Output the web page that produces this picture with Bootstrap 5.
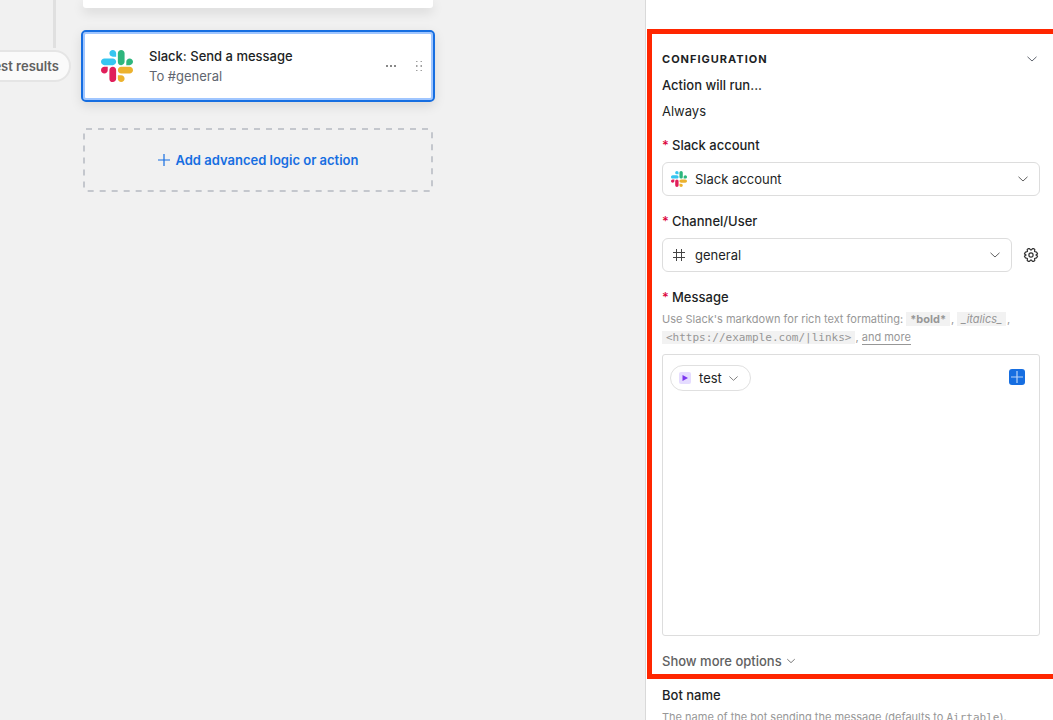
<!DOCTYPE html>
<html lang="en">
<head>
<meta charset="utf-8">
<meta name="viewport" content="width=device-width, initial-scale=1">
<title>Automation</title>
<link href="https://cdn.jsdelivr.net/npm/bootstrap@5.3.0/dist/css/bootstrap.min.css" rel="stylesheet">
<style>
body{font-family:Inter,"Liberation Sans",sans-serif;font-size:13px;line-height:20px;color:#1d1f25;background:#fff}
svg{display:block;flex:none}
.canvas{background:#f1f1f1;gap:10px}
.rail{width:71px}
.rail-line{width:3px;height:48px;background:#e0e0e0;margin:0 15px 2px 0}
.test-pill{font-size:13px;font-weight:600;line-height:18px;color:#616161;background:#fafafa;border:2px solid #e5e5e5;border-radius:16px;padding:5px 10px;white-space:nowrap}
.steps{width:354px}
.step-above{height:8px;background:#fff;border-radius:0 0 3px 3px;box-shadow:0 4px 12px rgba(0,0,0,.12);margin:0 2px 22px}
.step-selected{height:72px;background:#fff;border:2px solid #166ee1;border-radius:5px;box-shadow:inset 0 0 0 2px #a0c6ff,0 4px 12px rgba(0,0,0,.1);padding:0 10px 0 18px}
.step-name{font-weight:500}
.step-sub{color:#616670}
.step-actions{gap:18px}
.add-step{position:relative;height:64px;margin:26px 2px 0;border:0;background:none;color:#166ee1;font-weight:600;gap:6px}
.add-frame{position:absolute;inset:0;width:100%;height:100%}
.add-frame rect{width:calc(100% - 2px);height:calc(100% - 2px)}
.icon-btn{border:0;background:none;padding:0;color:#616670}
.inspector{flex:0 0 408px;border-left:1px solid #d9d9d9;padding-left:1px}
.inspector-top{height:29px}
.config{border:5px solid #ff2600;border-right:0;padding:15px 13px 2px 10px}
.config-title{font-size:11px;font-weight:700;line-height:20px;letter-spacing:1px;margin:0}
.collapse-btn{padding-right:2px}
.run-block{gap:6px;margin:6px 0 14px}
.req{color:#dc043b;width:10px}
.field-label{font-weight:500;margin:0 0 7px}
.pick{position:relative}
.picker-row{margin-bottom:15px}
.pick>svg{position:absolute;left:9px;top:9px;pointer-events:none}
.pick .form-select{height:34px;font-size:13px;line-height:20px;color:#1d1f25;border-color:#ddd;border-radius:6px;padding:6px 32px 6px 32px;background-position:right 10px center;background-size:12px 12px;background-image:url("data:image/svg+xml,%3Csvg xmlns='http://www.w3.org/2000/svg' viewBox='0 0 12 12'%3E%3Cpath d='M1.5 3.8 6 8l4.500-4.200' fill='none' stroke='%23616161' stroke-width='1'/%3E%3C/svg%3E")}
.gear-btn{padding:0 1px 0 11px}
.hint{font-size:11px;line-height:18px;color:#979797}
.msg-hint{margin:3px 0 7px}
.hint code{font-family:"DejaVu Sans Mono",monospace;font-size:11px;color:inherit}
.tag{background:#f2f2f2;padding:0 4px}
.hint .tag{margin-right:1px}
.hint code.tag{margin-right:0}
.hint a{color:inherit;text-decoration:none;border-bottom:1px solid #979797}
.editor{height:282px;border:1px solid #ddd;border-radius:3px;padding:10px 14px 8px 7px}
.token{height:26px;border:1px solid #e0e0e0;border-radius:13px;background:#fff;padding:0 11px 0 8px;color:#1d1f25}
.token span{margin:0 6px 0 8px}
.editor textarea{border:0;resize:none;outline:0;background:none;min-width:0}
.insert{width:16px;height:16px;border:0;border-radius:3px;background:#166ee1;padding:0;margin-top:4px}
.more{color:#616161;font-weight:500;margin:15px 0 1px}
.bot{padding:6px 13px 0 15px}
.bot .hint{margin-top:3px}
</style>
</head>
<body>
<svg width="0" height="0" class="position-absolute" aria-hidden="true">
<symbol id="slack" viewBox="0 0 16 16">
<path fill="#e01e5a" d="M3.362 10.110c0 .926-.756 1.681-1.681 1.681S0 11.036 0 10.111.756 8.430 1.680 8.430h1.682zm.846 0c0-.924.756-1.680 1.681-1.680s1.681.756 1.681 1.680v4.210c0 .924-.756 1.680-1.680 1.680a1.685 1.685 0 0 1-1.682-1.680z"/>
<path fill="#36c5f0" d="M5.890 3.362c-.926 0-1.682-.756-1.682-1.681S4.964 0 5.890 0s1.680.756 1.680 1.680v1.682zm0 .846c.924 0 1.680.756 1.680 1.681S6.814 7.570 5.890 7.570H1.680C.757 7.570 0 6.814 0 5.890c0-.926.756-1.682 1.680-1.682z"/>
<path fill="#2eb67d" d="M12.639 5.890c0-.926.755-1.682 1.680-1.682S16 4.964 16 5.889s-.756 1.681-1.680 1.681h-1.681zm-.848 0c0 .924-.755 1.680-1.680 1.680A1.685 1.685 0 0 1 8.430 5.890V1.680C8.430.757 9.186 0 10.110 0c.926 0 1.681.756 1.681 1.680z"/>
<path fill="#ecb22e" d="M10.110 12.638c.926 0 1.682.756 1.682 1.681S11.036 16 10.110 16s-1.681-.756-1.681-1.680v-1.682zm0-.847c-.924 0-1.680-.755-1.680-1.680 0-.925.756-1.681 1.680-1.681h4.210c.924 0 1.680.756 1.680 1.680 0 .926-.756 1.681-1.680 1.681z"/>
</symbol>
<symbol id="chev" viewBox="0 0 12 12"><path d="M1.500 3.800 6 8l4.500-4.200" fill="none" stroke="currentColor"/></symbol>
</svg>
<div class="d-flex vh-100 overflow-hidden">
  <main class="canvas d-flex align-items-start flex-grow-1 overflow-hidden">
    <div class="rail d-flex flex-column align-items-end flex-shrink-0">
      <div class="rail-line"></div>
      <button type="button" class="test-pill">Test results</button>
    </div>
    <div class="steps d-flex flex-column flex-shrink-0">
      <div class="step-above"></div>
      <div class="step-selected d-flex align-items-center">
        <svg width="32" height="32"><use href="#slack"/></svg>
        <div class="ms-3 flex-grow-1">
          <div class="step-name">Slack: Send a message</div>
          <div class="step-sub">To #general</div>
        </div>
        <div class="step-actions d-flex">
          <button type="button" class="icon-btn" aria-label="More actions"><svg width="12" height="12" viewBox="0 0 12 12" fill="#888"><path d="M1 5h2v2H1zM5 5h2v2H5zM9 5h2v2H9z"/></svg></button>
          <button type="button" class="icon-btn" aria-label="Drag"><svg width="8" height="12" viewBox="0 0 8 12" fill="#a0a0a0"><path d="M1 1h1.500v1H1zM5.500 1H7v1H5.500zM1 5h1.500v2H1zM5.500 5H7v2H5.500zM1 10h1.500v1H1zM5.500 10H7v1H5.500z"/></svg></button>
        </div>
      </div>
      <button type="button" class="add-step d-flex align-items-center justify-content-center">
        <svg class="add-frame" aria-hidden="true"><rect x="1" y="1" rx="2" fill="none" stroke="#c4c7cd" stroke-width="2" stroke-dasharray="6 6"/></svg>
        <svg width="12" height="12" viewBox="0 0 12 12"><path d="M6 0v12M0 6h12" stroke="#166ee1" stroke-width="1.200"/></svg>Add advanced logic or action
      </button>
    </div>
  </main>
  <aside class="inspector overflow-hidden">
    <div class="inspector-top"></div>
    <section class="config">
      <div class="d-flex justify-content-between align-items-center">
        <h2 class="config-title">CONFIGURATION</h2>
        <button type="button" class="icon-btn collapse-btn" aria-label="Collapse"><svg width="12" height="12"><use href="#chev"/></svg></button>
      </div>
      <div class="run-block d-flex flex-column">
        <div class="field-label mb-0">Action will run...</div>
        <div>Always</div>
      </div>
      <label class="field-label d-flex" for="acct"><span class="req">*</span>Slack account</label>
      <div class="pick picker-row">
        <svg width="16" height="16"><use href="#slack"/></svg>
        <select class="form-select" id="acct"><option>Slack account</option></select>
      </div>
      <label class="field-label d-flex" for="chan"><span class="req">*</span>Channel/User</label>
      <div class="d-flex align-items-center picker-row">
        <div class="pick flex-grow-1">
          <svg width="16" height="16" viewBox="0 0 16 16"><path d="M5.500 2v12M10.500 2v12M2 5.500h12M2 10.500h12" stroke="#444" fill="none"/></svg>
          <select class="form-select" id="chan"><option>general</option></select>
        </div>
        <button type="button" class="icon-btn gear-btn" aria-label="Settings"><svg width="16" height="16" viewBox="0 0 16 16" fill="none" stroke="#333" stroke-width="1.200" stroke-linejoin="round"><circle cx="8" cy="8" r="2.100"/><path d="M5.200 1.700h1.300L8 3.100l1.500-1.400h1.300l1 .8-.3 2 2 .6 1 1.500v.4L12.900 8l1.600 1v.4l-1 1.500-2 .6.3 2-1 .8H9.500L8 12.900l-1.500 1.400H5.200l-1-.8.3-2-2-.6-1-1.500V9l1.600-1-1.600-1v-.4l1-1.500 2-.6-.3-2z"/></svg></button>
      </div>
      <label class="field-label d-flex mb-0" for="msg"><span class="req">*</span>Message</label>
      <div class="hint msg-hint">Use Slack's markdown for rich text formatting: <strong class="tag">*bold*</strong>, <em class="tag">_italics_</em>, <code class="tag">&lt;https://example.com/|links&gt;</code>, <a href="#">and more</a></div>
      <div class="editor d-flex align-items-start">
        <button type="button" class="token d-flex align-items-center">
          <svg width="12" height="12" viewBox="0 0 12 12"><rect width="12" height="12" rx="2" fill="#e5dcff"/><path d="M3.500 3v6l5.500-3z" fill="#7c37ef"/></svg>
          <span>test</span>
          <svg width="11" height="11" color="#777"><use href="#chev"/></svg>
        </button>
        <textarea id="msg" class="flex-grow-1 h-100 p-0"></textarea>
        <button type="button" class="insert" aria-label="Insert value"><svg width="16" height="16" viewBox="0 0 16 16"><path d="M8 2v12M2 8h12" stroke="#b8d4fa" stroke-width="1.200"/></svg></button>
      </div>
      <button type="button" class="icon-btn more d-flex align-items-center">Show more options<svg class="ms-1" width="10" height="10"><use href="#chev"/></svg></button>
    </section>
    <div class="bot">
      <label class="field-label d-block mb-0" for="bot">Bot name</label>
      <div class="hint">The name of the bot sending the message (defaults to <code>Airtable</code>).</div>
      <input id="bot" class="form-control mt-2" type="text">
    </div>
  </aside>
</div>
<script src="https://cdn.jsdelivr.net/npm/bootstrap@5.3.0/dist/js/bootstrap.bundle.min.js"></script>
</body>
</html>
